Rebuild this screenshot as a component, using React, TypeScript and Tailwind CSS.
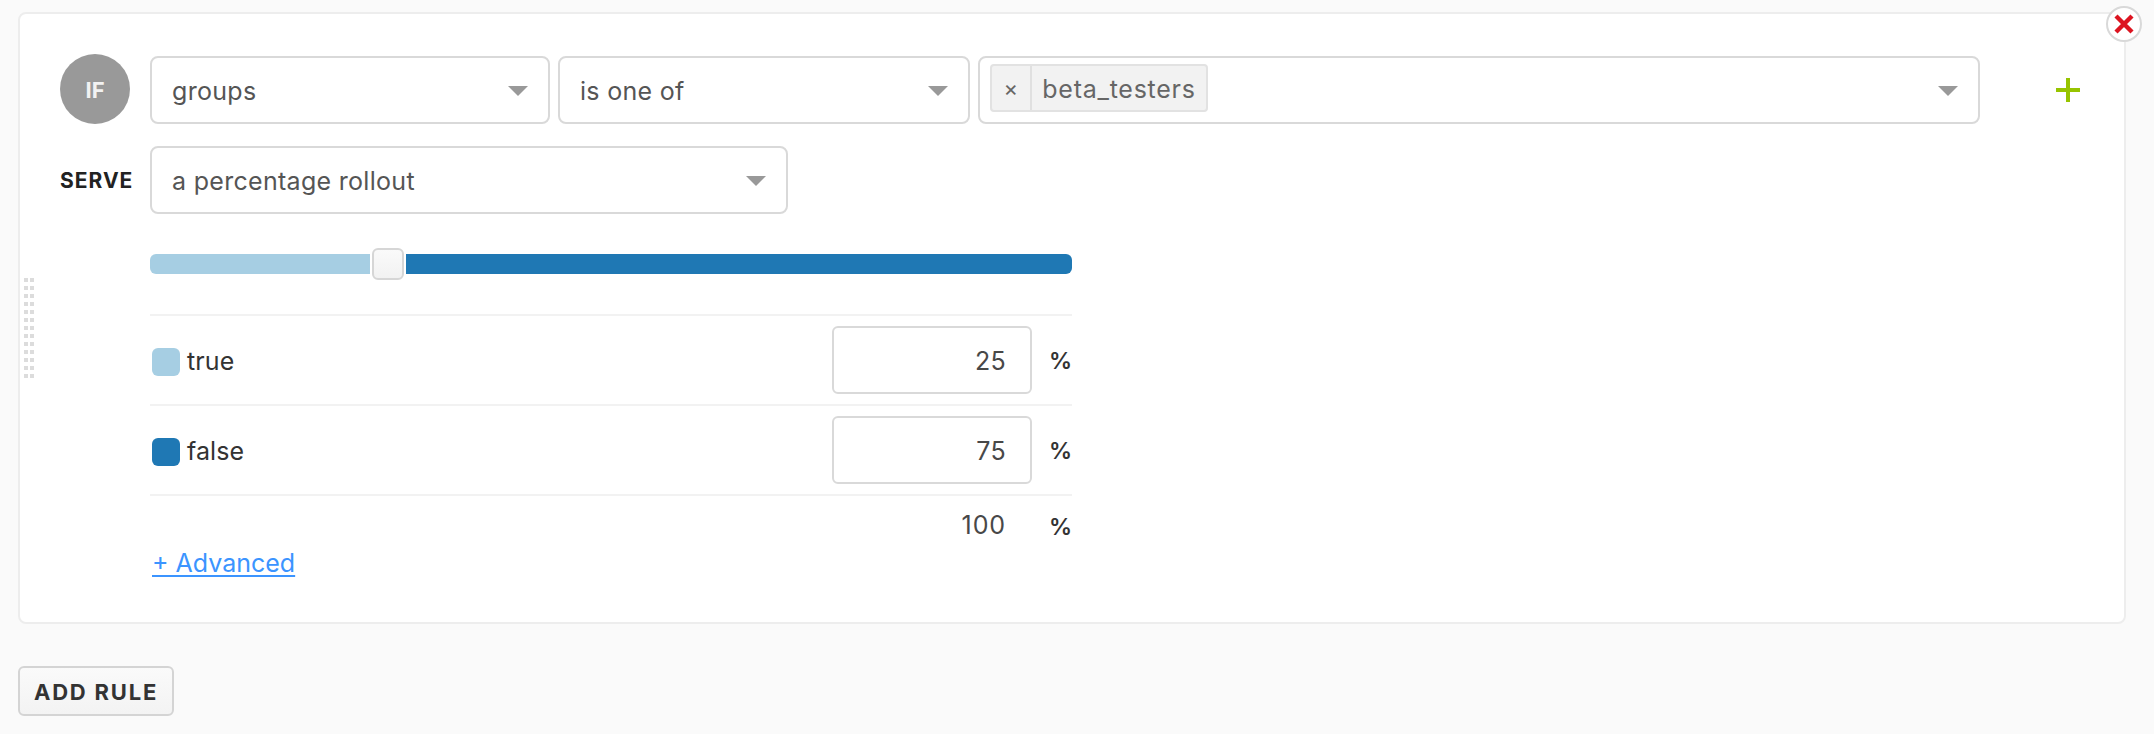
import React from "react";

function Caret() {
  return (
    <svg width="20" height="10" viewBox="0 0 20 10" className="mt-0.5 shrink-0">
      <path d="M0 0h20L10 10z" fill="#999999" />
    </svg>
  );
}

function Select({ label, width }: { label: string; width: string }) {
  return (
    <div
      className={`${width} flex h-[68px] shrink-0 items-center justify-between rounded-lg border-2 border-[#d9d9d9] bg-white pr-5 pl-5 text-[#555555]`}
    >
      <span className="pt-0.5">{label}</span>
      <Caret />
    </div>
  );
}

function Variation({ name, value, color }: { name: string; value: string; color: string }) {
  return (
    <div className="flex h-[90px] items-center border-t-2 border-[#f2f2f2] pl-0.5">
      <span className={`mt-1 size-7 rounded-md ${color}`} />
      <span className="ml-[7px] pt-0.5 tracking-[0.1px]">{name}</span>
      <div className="ml-auto flex h-[68px] w-[200px] items-center justify-end rounded-md border-2 border-[#d9d9d9] pt-0.5 pr-6 text-[#484848]">
        {value}
      </div>
      <span className="flex w-10 justify-end pt-0.5 text-[23px] font-semibold tracking-normal">%</span>
    </div>
  );
}

export default function App() {
  return (
    <div className="h-[734px] w-[2154px] bg-[#fafafa] pt-3 pl-[18px] font-['Inter',sans-serif] text-[25px] leading-8 tracking-[0.3px] text-[#333333]">
      <div className="relative flex h-[612px] w-[2108px] rounded-lg border-2 border-[#ededed] bg-white">
        <div className="mt-[264px] ml-1 grid h-[100px] w-[10px] shrink-0 grid-cols-2 gap-x-[2px] gap-y-1">
          {Array.from({ length: 26 }, (_, i) => (
            <span key={i} className="size-1 bg-[#dcdcdc]" />
          ))}
        </div>

        <div className="ml-[26px] flex flex-col pt-10">
          <div className="flex h-[70px] items-center">
            <div className="mr-5 flex size-[70px] items-center justify-center rounded-full bg-[#999999] pt-0.5 text-[22px] font-bold tracking-normal text-[#f2f2f2]">
              IF
            </div>
            <div className="flex h-[68px] gap-2 self-end">
              <Select label="groups" width="w-[400px]" />
              <Select label="is one of" width="w-[412px]" />
              <div className="flex h-[68px] w-[1002px] items-center justify-between rounded-lg border-2 border-[#d9d9d9] bg-white pr-5 pl-2.5">
                <div className="mb-1 flex h-12 items-stretch rounded border-2 border-[#e2e2e2] bg-[#f2f2f2] text-[#666666]">
                  <span className="flex w-10 items-center justify-center border-r-2 border-[#e0e0e0] text-[22px]">×</span>
                  <span className="flex w-[174px] items-center justify-center pt-0.5 tracking-[0.75px]">beta_testers</span>
                </div>
                <Caret />
              </div>
            </div>
            <svg width="24" height="24" viewBox="0 0 24 24" className="mt-0.5 ml-[76px]">
              <path d="M12 0v24M0 12h24" stroke="#97c400" strokeWidth="4" />
            </svg>
          </div>

          <div className="mt-[22px] flex items-center">
            <span className="w-[90px] pt-0.5 text-[21px] font-bold tracking-[1px] text-[#222222]">SERVE</span>
            <Select label="a percentage rollout" width="w-[638px]" />
          </div>

          <div className="ml-[90px] flex w-[922px] flex-col">
            <div className="mt-[34px] flex h-8 items-center gap-0.5">
              <span className="h-5 w-[220px] rounded-l-md bg-[#a6cee3]" />
              <span className="size-8 rounded-md border-2 border-[#d6d6d6] bg-linear-to-b from-[#fafafa] to-[#f2f2f2]" />
              <span className="h-5 flex-1 rounded-r-md bg-[#1f78b4]" />
            </div>
            <div className="mt-[34px]">
              <Variation name="true" value="25" color="bg-[#a6cee3]" />
              <Variation name="false" value="75" color="bg-[#1f78b4]" />
              <div className="flex h-[53px] items-start justify-end border-t-2 border-[#f2f2f2] pt-[13px]">
                <span className="tracking-[0.9px] text-[#484848]">100</span>
                <span className="flex w-[66px] justify-end pt-0.5 text-[23px] font-semibold tracking-normal">%</span>
              </div>
            </div>
            <a className="ml-0.5 self-start tracking-[0px] text-[#3b94ff] underline decoration-2 underline-offset-[3px]">+ Advanced</a>
          </div>
        </div>

        <button className="absolute -top-2 right-[-18px] flex size-9 items-center justify-center rounded-full border-2 border-[#d9d9d9] bg-white">
          <svg width="20" height="20" viewBox="0 0 20 20">
            <path d="M2 2l16 16M18 2L2 18" stroke="#dc1420" strokeWidth="4.4" />
          </svg>
        </button>
      </div>

      <button className="mt-[42px] flex h-[50px] w-[156px] items-center justify-center rounded-md border-2 border-[#d4d4d4] bg-linear-to-b from-[#fafafa] to-[#f3f3f3] pt-0.5 text-[22px] font-bold tracking-[1.8px]">
        ADD RULE
      </button>
    </div>
  );
}
